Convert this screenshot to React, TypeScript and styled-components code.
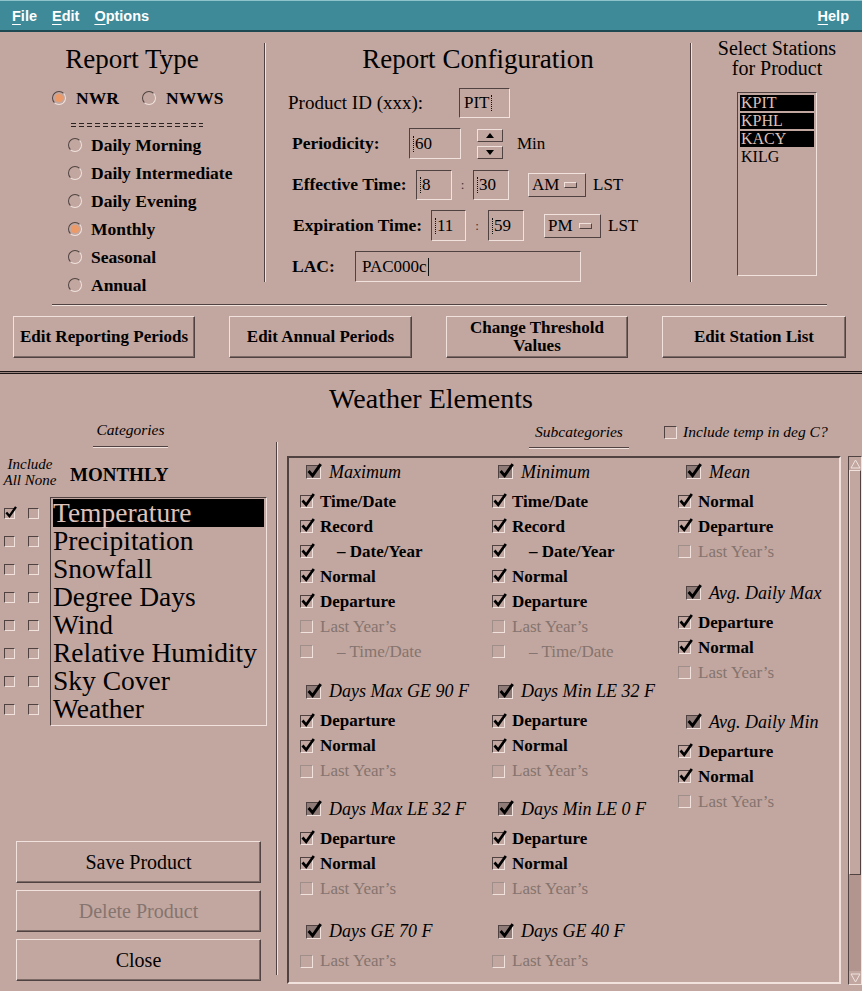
import React from "react";
import styled, { createGlobalStyle } from "styled-components";

const BG = "#c2a7a0";
const LIGHT = "#f1e2de";
const DARK = "#4f4240";
const SEL_TEXT = "#dcc2bb";
const DIM = "#85746f";
const TEAL = "#3e8a98";
const SERIF = `"Liberation Serif", "Times New Roman", serif`;
const SANS = `"Liberation Sans", Arial, sans-serif`;

const GlobalStyle = createGlobalStyle`
  html, body { margin: 0; padding: 0; background: ${BG}; }
  body { font-family: ${SERIF}; color: #000; }
  * { box-sizing: border-box; }
`;

const Window = styled.div`
  width: 862px;
  height: 991px;
  overflow: hidden;
  display: flex;
  flex-direction: column;
  background: ${BG};
`;

const MenuBar = styled.div`
  height: 32px;
  flex: none;
  display: flex;
  align-items: center;
  padding: 0 13px 0 12px;
  background: ${TEAL};
  border-top: 1px solid #8ec3cb;
  border-bottom: 2px solid #1d4a52;
  font-family: ${SANS};
  font-weight: bold;
  font-size: 14.5px;
  color: #fff;
`;

const MenuItem = styled.span<{ $right?: boolean }>`
  margin-right: ${(p) => (p.$right ? 0 : 15)}px;
  margin-left: ${(p) => (p.$right ? "auto" : "0")};
  u {
    text-decoration: underline;
    text-underline-offset: 3px;
  }
`;

const TopSection = styled.div`
  height: 272px;
  flex: none;
  display: flex;
`;

const Column = styled.div<{ $w: number; $pt: number; $center?: boolean }>`
  width: ${(p) => p.$w}px;
  flex: none;
  display: flex;
  flex-direction: column;
  align-items: ${(p) => (p.$center ? "center" : "stretch")};
  padding-top: ${(p) => p.$pt}px;
`;

const VSep = styled.div<{ $top: number; $h: number }>`
  width: 2px;
  flex: none;
  margin-top: ${(p) => p.$top}px;
  height: ${(p) => p.$h}px;
  border-left: 1px solid ${DARK};
  border-right: 1px solid ${LIGHT};
`;

const Heading = styled.h1<{ $size?: number }>`
  margin: 0;
  font-weight: normal;
  font-size: ${(p) => p.$size ?? 27}px;
  line-height: 32px;
  text-align: center;
`;

/* ---- radios ---- */
const PairRow = styled.div`
  display: flex;
  align-items: center;
  height: 28px;
  margin-top: 9px;
  padding-left: 52px;
`;

const Radio = styled.label<{ $w?: number; $gap: number }>`
  display: flex;
  align-items: center;
  gap: ${(p) => p.$gap}px;
  width: ${(p) => (p.$w ? `${p.$w}px` : "auto")};
  height: 28px;
  font-weight: bold;
  font-size: 17.5px;
`;

const RadioCircle = styled.span<{ $on?: boolean }>`
  width: 14px;
  height: 14px;
  flex: none;
  border-radius: 50%;
  border: 1px solid;
  border-color: ${DARK} ${LIGHT} ${LIGHT} ${DARK};
  display: inline-flex;
  align-items: center;
  justify-content: center;
  &::after {
    content: "";
    width: 8px;
    height: 8px;
    border-radius: 50%;
    background: ${(p) => (p.$on ? "#ec9a68" : "transparent")};
  }
`;

const DashRule = styled.div`
  width: 132px;
  height: 4px;
  margin: 11px 0 4px 71px;
  background-image: repeating-linear-gradient(90deg, #2b2322 0 5px, transparent 5px 8px),
    repeating-linear-gradient(90deg, #2b2322 0 5px, transparent 5px 8px);
  background-size: 100% 1px;
  background-repeat: no-repeat;
  background-position: 0 0, 0 3px;
`;

const RadioList = styled.div`
  display: flex;
  flex-direction: column;
  padding-left: 68px;
`;

/* ---- configuration ---- */
const ConfigRows = styled.div`
  margin-top: 7px;
  display: flex;
  flex-direction: column;
`;

const ConfigRow = styled.div<{ $pl: number }>`
  height: 41px;
  display: flex;
  align-items: center;
  padding-left: ${(p) => p.$pl}px;
`;

const FieldLabel = styled.span<{ $w: number; $plain?: boolean }>`
  width: ${(p) => p.$w}px;
  flex: none;
  font-weight: ${(p) => (p.$plain ? "normal" : "bold")};
  font-size: ${(p) => (p.$plain ? 19 : 17.5)}px;
`;

const TextField = styled.div<{ $w: number; $h?: number; $pl?: number }>`
  width: ${(p) => p.$w}px;
  height: ${(p) => p.$h ?? 31}px;
  flex: none;
  border: 1px solid;
  border-color: ${DARK} ${LIGHT} ${LIGHT} ${DARK};
  display: flex;
  align-items: center;
  padding-left: ${(p) => p.$pl ?? 4}px;
  font-size: 17px;
`;

const Caret = styled.span<{ $solid?: boolean }>`
  width: 0;
  height: ${(p) => (p.$solid ? 18 : 16)}px;
  border-left: 1px ${(p) => (p.$solid ? "solid" : "dotted")} #111;
  margin: 0 1px;
`;

const Colon = styled.span<{ $w: number }>`
  width: ${(p) => p.$w}px;
  flex: none;
  text-align: center;
  font-size: 13px;
  color: #3a3030;
`;

const Spinner = styled.div`
  display: flex;
  flex-direction: column;
  gap: 4px;
  margin-left: 16px;
`;

const ArrowButton = styled.span`
  width: 26px;
  height: 13px;
  border: 1px solid;
  border-color: ${LIGHT} ${DARK} ${DARK} ${LIGHT};
  display: flex;
  align-items: center;
  justify-content: center;
`;

const OptionMenu = styled.div<{ $w: number; $ml: number }>`
  width: ${(p) => p.$w}px;
  height: 24px;
  margin-left: ${(p) => p.$ml}px;
  border: 1px solid;
  border-color: ${LIGHT} ${DARK} ${DARK} ${LIGHT};
  display: flex;
  align-items: center;
  justify-content: space-between;
  padding: 0 8px 0 3px;
  font-size: 17px;
`;

const OptionMark = styled.span`
  width: 13px;
  height: 6px;
  border: 1px solid;
  border-color: ${LIGHT} ${DARK} ${DARK} ${LIGHT};
`;

const Unit = styled.span<{ $ml: number }>`
  margin-left: ${(p) => p.$ml}px;
  font-size: 17px;
`;

/* ---- stations ---- */
const StationTitle = styled.div`
  font-size: 20px;
  line-height: 20px;
  text-align: center;
`;

const StationList = styled.div`
  width: 80px;
  height: 184px;
  margin-top: 14px;
  border: 1px solid;
  border-color: ${DARK} ${LIGHT} ${LIGHT} ${DARK};
  padding: 2px;
`;

const StationItem = styled.div<{ $sel?: boolean }>`
  height: 16px;
  line-height: 16px;
  margin-bottom: 2px;
  padding-left: 1px;
  font-size: 16px;
  background: ${(p) => (p.$sel ? "#000" : "transparent")};
  color: ${(p) => (p.$sel ? SEL_TEXT : "#000")};
`;

/* ---- middle band ---- */
const HSep = styled.div`
  flex: none;
  height: 2px;
  margin: 0 35px 0 52px;
  border-top: 1px solid ${DARK};
  border-bottom: 1px solid ${LIGHT};
`;

const ButtonRow = styled.div`
  flex: none;
  display: flex;
  justify-content: space-between;
  padding: 0 16px 0 13px;
  margin-top: 10px;
`;

const PushButton = styled.div<{ $w?: number; $big?: boolean; $disabled?: boolean }>`
  width: ${(p) => (p.$w ? `${p.$w}px` : "auto")};
  height: 42px;
  border: 1px solid;
  border-color: ${LIGHT} ${DARK} ${DARK} ${LIGHT};
  box-shadow: inset -1px -1px 0 #7c6a66;
  display: flex;
  align-items: center;
  justify-content: center;
  text-align: center;
  font-weight: ${(p) => (p.$big ? "normal" : "bold")};
  font-size: ${(p) => (p.$big ? 20 : 17)}px;
  line-height: 18px;
  color: ${(p) => (p.$disabled ? DIM : "#000")};
`;

const DoubleRule = styled.div`
  flex: none;
  height: 3px;
  margin-top: 13px;
  border-top: 1px solid #1c1616;
  border-bottom: 1px solid #1c1616;
  background: #9a8580;
`;

const TitleBand = styled.div`
  flex: none;
  margin-top: 9px;
`;

/* ---- bottom ---- */
const BottomSection = styled.div`
  flex: 1;
  display: flex;
`;

const LeftPanel = styled.div`
  width: 276px;
  flex: none;
  display: flex;
  flex-direction: column;
`;

const EtchedLabel = styled.div<{ $ml: number; $w: number; $mt: number; $pb: number }>`
  margin: ${(p) => p.$mt}px 0 0 ${(p) => p.$ml}px;
  width: ${(p) => p.$w}px;
  flex: none;
  text-align: center;
  font-style: italic;
  font-size: 15.5px;
  line-height: 18px;
  padding-bottom: ${(p) => p.$pb}px;
  border-bottom: 1px solid ${DARK};
  box-shadow: 0 1px 0 ${LIGHT};
`;

const IncludeRow = styled.div`
  display: flex;
  height: 32px;
  margin-top: 9px;
  align-items: flex-start;
`;

const IncludeLabel = styled.div`
  width: 58px;
  margin-left: 1px;
  text-align: center;
  font-style: italic;
  font-size: 15px;
  line-height: 16px;
`;

const Monthly = styled.div`
  margin: 6px 0 0 11px;
  font-weight: bold;
  font-size: 19px;
  line-height: 26px;
`;

const ListArea = styled.div`
  display: flex;
  margin-top: 9px;
`;

const CheckCol = styled.div`
  width: 50px;
  padding-top: 2px;
  display: flex;
  flex-direction: column;
`;

const CheckRow = styled.div`
  height: 28px;
  display: flex;
  align-items: center;
  gap: 13px;
  padding-left: 4px;
`;

const CatList = styled.div`
  width: 217px;
  border: 1px solid;
  border-color: ${DARK} ${LIGHT} ${LIGHT} ${DARK};
  padding: 1px 2px 2px;
`;

const CatItem = styled.div<{ $sel?: boolean }>`
  height: 28px;
  line-height: 28px;
  font-size: 27.5px;
  white-space: nowrap;
  background: ${(p) => (p.$sel ? "#000" : "transparent")};
  color: ${(p) => (p.$sel ? SEL_TEXT : "#000")};
`;

const LeftButtons = styled.div`
  display: flex;
  flex-direction: column;
  gap: 7px;
  margin-top: 115px;
  padding: 0 15px 0 16px;
`;

const RightPanel = styled.div`
  flex: 1;
  display: flex;
  flex-direction: column;
`;

const SubHeader = styled.div`
  display: flex;
  align-items: flex-start;
  margin-top: 8px;
`;

const IncludeTemp = styled.label`
  display: flex;
  align-items: center;
  gap: 6px;
  height: 18px;
  margin-left: 35px;
  font-style: italic;
  font-size: 15.5px;
`;

const ScrollWrap = styled.div`
  display: flex;
  gap: 7px;
  margin-top: 8px;
  padding-left: 9px;
`;

const ScrollBox = styled.div`
  width: 554px;
  height: 528px;
  flex: none;
  border: 2px solid;
  border-color: ${DARK} ${LIGHT} ${LIGHT} ${DARK};
  padding-left: 11px;
  display: grid;
  grid-template-columns: 192px 186px 1fr;
  align-items: start;
  overflow: hidden;
`;

const SubColumn = styled.div`
  display: flex;
  flex-direction: column;
`;

const Group = styled.div<{ $mt: number }>`
  display: flex;
  flex-direction: column;
  margin-top: ${(p) => p.$mt}px;
`;

const GroupHeader = styled.div<{ $pl: number }>`
  height: 28px;
  display: flex;
  align-items: center;
  gap: 8px;
  padding-left: ${(p) => p.$pl}px;
  font-style: italic;
  font-size: 18px;
  white-space: nowrap;
`;

const Items = styled.div`
  padding-top: 3px;
  display: flex;
  flex-direction: column;
`;

const Item = styled.div<{ $off?: boolean }>`
  height: 25px;
  display: flex;
  align-items: center;
  gap: 7px;
  font-weight: ${(p) => (p.$off ? "normal" : "bold")};
  font-size: 17px;
  white-space: nowrap;
  color: ${(p) => (p.$off ? DIM : "#000")};
`;

const ItemText = styled.span<{ $indent?: boolean }>`
  padding-left: ${(p) => (p.$indent ? 17 : 0)}px;
`;

const Box = styled.span<{ $w: number; $h: number; $fill?: boolean; $off?: boolean }>`
  position: relative;
  flex: none;
  width: ${(p) => p.$w}px;
  height: ${(p) => p.$h}px;
  border: 1px solid;
  border-color: ${(p) => (p.$off ? `#a08e8a ${LIGHT} ${LIGHT} #a08e8a` : `${DARK} ${LIGHT} ${LIGHT} ${DARK}`)};
  background: ${(p) => (p.$fill ? "#8e7a76" : "transparent")};
  svg {
    position: absolute;
    left: 0;
    top: -3px;
  }
`;

const ScrollBar = styled.div`
  width: 14px;
  height: 529px;
  flex: none;
  display: flex;
  flex-direction: column;
  border: 1px solid;
  border-color: ${DARK} ${LIGHT} ${LIGHT} ${DARK};
  background: #b2958f;
`;

const ScrollArrow = styled.div<{ $bottom?: boolean }>`
  height: 13px;
  flex: none;
  margin-top: ${(p) => (p.$bottom ? "auto" : "0")};
  display: flex;
  align-items: center;
  justify-content: center;
  background: ${BG};
`;

const Thumb = styled.div`
  height: 405px;
  flex: none;
  border: 1px solid;
  border-color: ${LIGHT} ${DARK} ${DARK} ${LIGHT};
  background: ${BG};
`;

/* ---- small drawings ---- */
const CheckMark = ({ size }: { size: number }) => (
  <svg width={size} height={size} viewBox="0 0 14 14">
    <path d="M1.5 7.5 L5.2 11.8 L12.8 1" fill="none" stroke="#000" strokeWidth="2.7" />
  </svg>
);

const CheckBox = ({
  on,
  off,
  size = 13,
  header,
}: {
  on?: boolean;
  off?: boolean;
  size?: number;
  header?: boolean;
}) => (
  <Box $w={header ? 15 : size} $h={header ? 14 : size} $fill={header} $off={off}>
    {on && <CheckMark size={header ? 15 : size + 1} />}
  </Box>
);

const Tri = ({ down }: { down?: boolean }) => (
  <svg width="8" height="5" viewBox="0 0 8 5">
    <polygon points={down ? "0,0 8,0 4,5" : "4,0 8,5 0,5"} fill="#000" />
  </svg>
);

const ScrollTri = ({ down }: { down?: boolean }) => (
  <svg width="11" height="10" viewBox="0 0 11 10">
    <polygon
      points={down ? "1,1 10,1 5.5,9" : "5.5,1 10,9 1,9"}
      fill="none"
      stroke={LIGHT}
      strokeWidth="1"
    />
  </svg>
);

/* ---- data ---- */
type Sub = { label: string; on?: boolean; off?: boolean; indent?: boolean };
type GroupData = { title: string; mt: number; items: Sub[] };

const on = (label: string, indent = false): Sub => ({ label, on: true, indent });
const last: Sub = { label: "Last Year’s", off: true };

const subColumns: { hpl: number; groups: GroupData[] }[] = [
  {
    hpl: 6,
    groups: [
      {
        title: "Maximum",
        mt: 0,
        items: [
          on("Time/Date"),
          on("Record"),
          on("– Date/Year", true),
          on("Normal"),
          on("Departure"),
          last,
          { label: "– Time/Date", off: true, indent: true },
        ],
      },
      { title: "Days Max GE 90 F", mt: 13.5, items: [on("Departure"), on("Normal"), last] },
      { title: "Days Max LE 32 F", mt: 11.5, items: [on("Departure"), on("Normal"), last] },
      { title: "Days GE 70 F", mt: 16.5, items: [last] },
    ],
  },
  {
    hpl: 6,
    groups: [
      {
        title: "Minimum",
        mt: 0,
        items: [
          on("Time/Date"),
          on("Record"),
          on("– Date/Year", true),
          on("Normal"),
          on("Departure"),
          last,
          { label: "– Time/Date", off: true, indent: true },
        ],
      },
      { title: "Days Min LE 32 F", mt: 13.5, items: [on("Departure"), on("Normal"), last] },
      { title: "Days Min LE 0 F", mt: 11.5, items: [on("Departure"), on("Normal"), last] },
      { title: "Days GE 40 F", mt: 16.5, items: [last] },
    ],
  },
  {
    hpl: 8,
    groups: [
      { title: "Mean", mt: 0, items: [on("Normal"), on("Departure"), last] },
      { title: "Avg. Daily Max", mt: 15, items: [on("Departure"), on("Normal"), last] },
      { title: "Avg. Daily Min", mt: 23, items: [on("Departure"), on("Normal"), last] },
    ],
  },
];

const categories = [
  "Temperature",
  "Precipitation",
  "Snowfall",
  "Degree Days",
  "Wind",
  "Relative Humidity",
  "Sky Cover",
  "Weather",
];

const reportTypes = [
  { label: "Daily Morning" },
  { label: "Daily Intermediate" },
  { label: "Daily Evening" },
  { label: "Monthly", on: true },
  { label: "Seasonal" },
  { label: "Annual" },
];

const stations = [
  { id: "KPIT", sel: true },
  { id: "KPHL", sel: true },
  { id: "KACY", sel: true },
  { id: "KILG" },
];

export default function App() {
  return (
    <>
      <GlobalStyle />
      <Window>
        <MenuBar>
          <MenuItem>
            <u>F</u>ile
          </MenuItem>
          <MenuItem>
            <u>E</u>dit
          </MenuItem>
          <MenuItem>
            <u>O</u>ptions
          </MenuItem>
          <MenuItem $right>
            <u>H</u>elp
          </MenuItem>
        </MenuBar>

        <TopSection>
          <Column $w={264} $pt={11}>
            <Heading>Report Type</Heading>
            <PairRow>
              <Radio $w={90} $gap={10}>
                <RadioCircle $on />
                NWR
              </Radio>
              <Radio $gap={10}>
                <RadioCircle />
                NWWS
              </Radio>
            </PairRow>
            <DashRule />
            <RadioList>
              {reportTypes.map((r) => (
                <Radio key={r.label} $gap={9}>
                  <RadioCircle $on={r.on} />
                  {r.label}
                </Radio>
              ))}
            </RadioList>
          </Column>

          <VSep $top={11} $h={239} />

          <Column $w={424} $pt={11}>
            <Heading>Report Configuration</Heading>
            <ConfigRows>
              <ConfigRow $pl={22}>
                <FieldLabel $w={171} $plain>
                  Product ID (xxx):
                </FieldLabel>
                <TextField $w={51} $h={30} $pl={4}>
                  PIT
                  <Caret />
                </TextField>
              </ConfigRow>
              <ConfigRow $pl={26}>
                <FieldLabel $w={117}>Periodicity:</FieldLabel>
                <TextField $w={52} $pl={2}>
                  <Caret />
                  60
                </TextField>
                <Spinner>
                  <ArrowButton>
                    <Tri />
                  </ArrowButton>
                  <ArrowButton>
                    <Tri down />
                  </ArrowButton>
                </Spinner>
                <Unit $ml={14}>Min</Unit>
              </ConfigRow>
              <ConfigRow $pl={26}>
                <FieldLabel $w={124}>Effective Time:</FieldLabel>
                <TextField $w={36} $h={30} $pl={2}>
                  <Caret />8
                </TextField>
                <Colon $w={21}>:</Colon>
                <TextField $w={36} $h={30} $pl={2}>
                  <Caret />
                  30
                </TextField>
                <OptionMenu $w={58} $ml={19}>
                  AM
                  <OptionMark />
                </OptionMenu>
                <Unit $ml={7}>LST</Unit>
              </ConfigRow>
              <ConfigRow $pl={27}>
                <FieldLabel $w={138}>Expiration Time:</FieldLabel>
                <TextField $w={35} $pl={2}>
                  <Caret />
                  11
                </TextField>
                <Colon $w={22}>:</Colon>
                <TextField $w={36} $pl={2}>
                  <Caret />
                  59
                </TextField>
                <OptionMenu $w={57} $ml={20}>
                  PM
                  <OptionMark />
                </OptionMenu>
                <Unit $ml={7}>LST</Unit>
              </ConfigRow>
              <ConfigRow $pl={26}>
                <FieldLabel $w={63}>LAC:</FieldLabel>
                <TextField $w={226} $pl={6}>
                  PAC000c
                  <Caret $solid />
                </TextField>
              </ConfigRow>
            </ConfigRows>
          </Column>

          <VSep $top={11} $h={239} />

          <Column $w={170} $pt={6} $center>
            <StationTitle>
              Select Stations
              <br />
              for Product
            </StationTitle>
            <StationList>
              {stations.map((s) => (
                <StationItem key={s.id} $sel={s.sel}>
                  {s.id}
                </StationItem>
              ))}
            </StationList>
          </Column>
        </TopSection>

        <HSep />

        <ButtonRow>
          <PushButton $w={182}>Edit Reporting Periods</PushButton>
          <PushButton $w={183}>Edit Annual Periods</PushButton>
          <PushButton $w={182}>
            Change Threshold
            <br />
            Values
          </PushButton>
          <PushButton $w={184}>Edit Station List</PushButton>
        </ButtonRow>

        <DoubleRule />

        <TitleBand>
          <Heading $size={28}>Weather Elements</Heading>
        </TitleBand>

        <BottomSection>
          <LeftPanel>
            <EtchedLabel $ml={93} $w={75} $mt={6} $pb={7}>
              Categories
            </EtchedLabel>
            <IncludeRow>
              <IncludeLabel>
                Include
                <br />
                All None
              </IncludeLabel>
              <Monthly>MONTHLY</Monthly>
            </IncludeRow>
            <ListArea>
              <CheckCol>
                {categories.map((c, i) => (
                  <CheckRow key={c}>
                    <CheckBox size={11} on={i === 0} />
                    <CheckBox size={11} />
                  </CheckRow>
                ))}
              </CheckCol>
              <CatList>
                {categories.map((c, i) => (
                  <CatItem key={c} $sel={i === 0}>
                    {c}
                  </CatItem>
                ))}
              </CatList>
            </ListArea>
            <LeftButtons>
              <PushButton $big>Save Product</PushButton>
              <PushButton $big $disabled>
                Delete Product
              </PushButton>
              <PushButton $big>Close</PushButton>
            </LeftButtons>
          </LeftPanel>

          <VSep $top={27} $h={533} />

          <RightPanel>
            <SubHeader>
              <EtchedLabel $ml={251} $w={100} $mt={0} $pb={6}>
                Subcategories
              </EtchedLabel>
              <IncludeTemp>
                <CheckBox size={13} />
                Include temp in deg C?
              </IncludeTemp>
            </SubHeader>
            <ScrollWrap>
              <ScrollBox>
                {subColumns.map((col, ci) => (
                  <SubColumn key={ci}>
                    {col.groups.map((g) => (
                      <Group key={g.title} $mt={g.mt}>
                        <GroupHeader $pl={col.hpl}>
                          <CheckBox header on />
                          {g.title}
                        </GroupHeader>
                        <Items>
                          {g.items.map((it, ii) => (
                            <Item key={ii} $off={it.off}>
                              <CheckBox on={it.on} off={it.off} />
                              <ItemText $indent={it.indent}>{it.label}</ItemText>
                            </Item>
                          ))}
                        </Items>
                      </Group>
                    ))}
                  </SubColumn>
                ))}
              </ScrollBox>
              <ScrollBar>
                <ScrollArrow>
                  <ScrollTri />
                </ScrollArrow>
                <Thumb />
                <ScrollArrow $bottom>
                  <ScrollTri down />
                </ScrollArrow>
              </ScrollBar>
            </ScrollWrap>
          </RightPanel>
        </BottomSection>
      </Window>
    </>
  );
}
